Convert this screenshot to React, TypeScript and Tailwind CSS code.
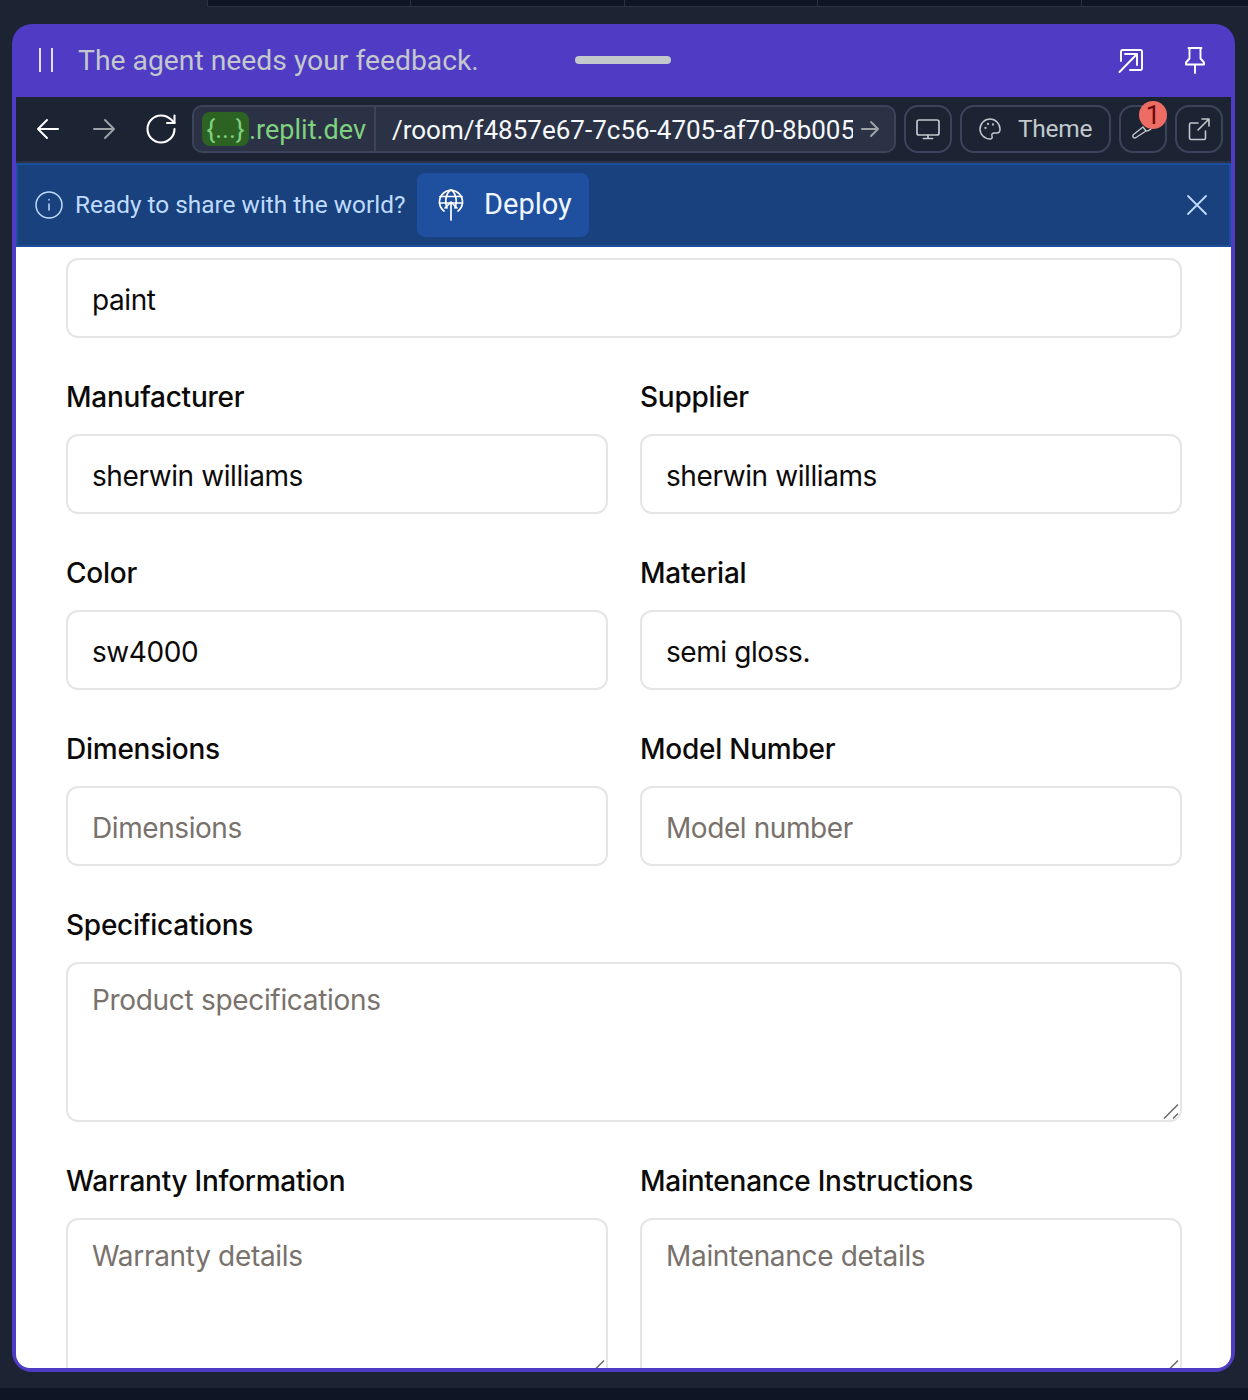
import React from "react";

const sans = "font-['Inter',sans-serif]";
const plex = "font-['Roboto',sans-serif]";

function Stroke({ size, className, children, vb, sw = 2 }: { size: number; className?: string; children: React.ReactNode; vb?: number; sw?: number }) {
  const box = vb ?? size;
  return (
    <svg width={size} height={size} viewBox={`0 0 ${box} ${box}`} fill="none" stroke="currentColor" strokeWidth={sw} strokeLinecap="round" strokeLinejoin="round" className={`shrink-0 ${className ?? ""}`}>
      {children}
    </svg>
  );
}

function Label({ children }: { children: string }) {
  return <label className="h-[40px] text-[28px] leading-[38px] font-medium tracking-[-0.25px] text-[#0c0a09]">{children}</label>;
}

function Field({ label, value, placeholder }: { label: string; value?: string; placeholder?: string }) {
  return (
    <div className="flex flex-col gap-[16px]">
      <Label>{label}</Label>
      <input readOnly defaultValue={value} placeholder={placeholder} className="h-[80px] w-full rounded-[12px] border-2 border-[#e5e5e5] bg-white px-[24px] pt-[4px] text-[28px] tracking-[-0.42px] text-[#0c0a09] outline-none placeholder:text-[#78716c]" />
    </div>
  );
}

function Area({ label, placeholder }: { label: string; placeholder: string }) {
  return (
    <div className="flex flex-col gap-[16px]">
      <Label>{label}</Label>
      <div className="relative">
        <textarea readOnly placeholder={placeholder} className="block h-[160px] w-full resize-none rounded-[12px] border-2 border-[#e5e5e5] bg-white px-[24px] pt-[16px] text-[28px] leading-[40px] tracking-[-0.32px] text-[#0c0a09] outline-none placeholder:text-[#78716c]" />
        <svg width="16" height="15" viewBox="0 0 16 15" fill="none" stroke="#6b6b6b" strokeWidth="1.5" className="absolute right-[3px] bottom-[3px]">
          <path d="M1 14.5 15 .5M10 14.5l5-5" />
        </svg>
      </div>
    </div>
  );
}

export default function App() {
  return (
    <div className={`${sans} flex h-[1400px] w-[1248px] flex-col overflow-hidden bg-[#1c2333]`}>
      <div className="flex h-[8px] shrink-0 pl-[207px]">
        <div className="flex h-[7px] flex-1 border-b border-l border-[#2b3245] bg-[#0e1525]">
          <div className="w-[203px] border-r border-[#2b3245]" />
          <div className="w-[214px] border-r border-[#2b3245]" />
          <div className="w-[193px] border-r border-[#2b3245]" />
          <div className="w-[264px] border-r border-[#2b3245]" />
        </div>
      </div>
      <div className="flex-1 px-[12px] pt-[16px]">
        <div className="flex h-[1348px] w-[1223px] flex-col overflow-hidden rounded-[20px] bg-[#4f3bc4] px-[4px] pb-[4px]">
          {/* header */}
          <div className="flex h-[73px] shrink-0 items-center pb-[1px]">
            <div className="ml-[23px] flex h-[24px] w-[14px] justify-between">
              <div className="w-[2px] bg-[#e2e0f5]" />
              <div className="w-[2px] bg-[#e2e0f5]" />
            </div>
            <span className={`${plex} ml-[25px] w-[497px] pt-[2px] text-[28.3px] text-[#c2c8cc]`}>The agent needs your feedback.</span>
            <div className="h-[8px] w-[96px] rounded-full bg-[#c2c8cc]" />
            <div className="flex-1" />
            <Stroke size={28} sw={1.9} className="text-white">
              <path d="M4 15V5.5A1.5 1.5 0 0 1 5.5 4H23.5A1.5 1.5 0 0 1 25 5.5V22.5A1.5 1.5 0 0 1 23.5 24H13" />
              <path d="M2.5 26 20 8M8 8H20V19" />
            </Stroke>
            <Stroke size={30} sw={1.9} className="ml-[35px] mr-[21px] text-white">
              <path d="M8.5 3h13M9.5 3v10.5l-3.5 4v2h18v-2l-3.5-4V3M15 19.5V28" />
            </Stroke>
          </div>
          {/* toolbar */}
          <div className={`${plex} flex h-[66px] shrink-0 items-center border-b-2 border-[#2b3245] bg-[#1c2333] text-[#f5f9fc]`}>
            <Stroke size={28} sw={2} className="ml-[18px] text-white"><path d="M24 14H4M13 5l-9 9 9 9" /></Stroke>
            <Stroke size={28} sw={2} className="ml-[28px] text-[#9da2a6]"><path d="M4 14h20M15 5l9 9-9 9" /></Stroke>
            <Stroke size={36} vb={24} sw={1.4} className="ml-[25px] text-white">
              <path d="M21 12a9 9 0 1 1-9-9c2.52 0 4.93 1 6.74 2.74L21 8" />
              <path d="M21 3v5h-5" />
            </Stroke>
            <div className="ml-[13px] flex h-[48px] w-[704px] items-center overflow-hidden rounded-[10px] border-2 border-[#3c445c] bg-[#2b3245]">
              <div className="flex h-full w-[180px] items-center pl-[8px] text-[27px] text-[#7fd17f]">
                <span className="flex h-[34px] w-[47px] shrink-0 items-center justify-center rounded-[8px] bg-[#2c6322] pt-[1px] text-[26px]">{"{...}"}</span>
                <span className="whitespace-nowrap pt-[2px]">.replit.dev</span>
              </div>
              <div className="h-full w-[2px] bg-[#3c445c]" />
              <div className="ml-[16px] w-[461px] overflow-hidden whitespace-nowrap pt-[2px] text-[26px] text-[#f5f9fc]">/room/f4857e67-7c56-4705-af70-8b005e7f2c1a</div>
              <Stroke size={22} sw={2} className="ml-[6px] text-[#9da2a6]"><path d="M3 11h16M12 4l7 7-7 7" /></Stroke>
            </div>
            <div className="ml-[8px] flex h-[48px] w-[48px] shrink-0 items-center justify-center rounded-[14px] border-2 border-[#3c445c]">
              <Stroke size={26} sw={1.7} className="text-[#c2c8cc]"><rect x="2" y="4" width="22" height="15" rx="2" /><path d="M13 19v3M8.5 22.5h9" /></Stroke>
            </div>
            <div className="ml-[8px] flex h-[48px] w-[151px] shrink-0 items-center rounded-[14px] border-2 border-[#3c445c] pl-[16px]">
              <Stroke size={24} sw={1.5} className="text-[#c2c8cc]">
                <path d="M12 2a10 10 0 1 0 0 20c2 0 2.5-1.5 2-3-.6-2 .5-3 2.5-3H19c2 0 3-1.5 3-4 0-5.5-4.5-10-10-10Z" />
                <circle cx="7.5" cy="11" r=".4" /><circle cx="10" cy="7" r=".4" /><circle cx="15" cy="7.5" r=".4" />
              </Stroke>
              <span className="ml-[16px] pt-[1px] text-[24.5px] tracking-[-0.3px] text-[#c2c8cc]">Theme</span>
            </div>
            <div className="relative ml-[8px] flex h-[48px] w-[48px] shrink-0 items-center justify-center rounded-[14px] border-2 border-[#3c445c]">
              <Stroke size={24} sw={1.4} className="text-[#c2c8cc]"><path d="M2.5 17.5 12 10l3 4-10 6.5a1.7 1.7 0 0 1-2.5-3ZM15 14c3 0 7-2.5 7-6" /></Stroke>
              <div className="absolute left-[18px] top-[-6px] flex h-[28px] w-[28px] items-center justify-center rounded-full bg-[#ed6c63] text-[26px] leading-none text-[#6b0a0a]">1</div>
            </div>
            <div className="ml-[8px] flex h-[48px] w-[48px] shrink-0 items-center justify-center rounded-[14px] border-2 border-[#3c445c]">
              <Stroke size={24} sw={1.6} className="text-[#c2c8cc]"><path d="M11 6H4A1.5 1.5 0 0 0 2.5 7.5V21A1.5 1.5 0 0 0 4 22.5h13a1.5 1.5 0 0 0 1.5-1.5v-7M11 13 22 2M15 2h7v7" /></Stroke>
            </div>
          </div>
          {/* banner */}
          <div className={`${plex} flex h-[84px] shrink-0 items-center border-2 border-[#1d4e9e] bg-[#18417e]`}>
            <Stroke size={30} sw={1.5} className="ml-[16px] text-[#bfdbfe]"><circle cx="15" cy="15" r="13" /><path d="M15 14v6M15 9.5v.5" /></Stroke>
            <span className="ml-[11px] w-[342px] whitespace-nowrap pt-[1px] text-[24.4px] text-[#bfdbfe]">Ready to share with the world?</span>
            <div className="flex h-[64px] w-[172px] shrink-0 items-center rounded-[8px] bg-[#1f4f9f] pl-[18px] text-[#eff6ff]">
              <Stroke size={32} sw={1.7} className="text-white">
                <path d="M9 22A11.5 11.5 0 1 1 23 22" />
                <path d="M16 .5C10 5 10 14 12 19M16 .5C22 5 22 14 20 19M5 7.5h22M4.5 14h23" />
                <path d="M16 31V13M10 19l6-6 6 6" />
              </Stroke>
              <span className="ml-[17px] text-[29px]">Deploy</span>
            </div>
            <div className="flex-1" />
            <Stroke size={28} sw={1.8} className="mr-[18px] text-[#bfdbfe]"><path d="m5 5 18 18M23 5 5 23" /></Stroke>
          </div>
          {/* form */}
          <div className="min-h-0 flex-1 overflow-hidden rounded-b-[14px] bg-white pt-[11px] pr-[49px] pl-[50px]">
            <input readOnly defaultValue="paint" className="h-[80px] w-full rounded-[12px] border-2 border-[#e5e5e5] bg-white px-[24px] pt-[4px] text-[28px] tracking-[-0.42px] text-[#0c0a09] outline-none" />
            <div className="mt-[40px] grid grid-cols-2 gap-x-[32px] gap-y-[40px]">
              <Field label="Manufacturer" value="sherwin williams" />
              <Field label="Supplier" value="sherwin williams" />
              <Field label="Color" value="sw4000" />
              <Field label="Material" value="semi gloss." />
              <Field label="Dimensions" placeholder="Dimensions" />
              <Field label="Model Number" placeholder="Model number" />
              <div className="col-span-2"><Area label="Specifications" placeholder="Product specifications" /></div>
              <Area label="Warranty Information" placeholder="Warranty details" />
              <Area label="Maintenance Instructions" placeholder="Maintenance details" />
            </div>
          </div>
        </div>
      </div>
      <div className="h-[12px] shrink-0 bg-[#0e1525]" />
    </div>
  );
}
